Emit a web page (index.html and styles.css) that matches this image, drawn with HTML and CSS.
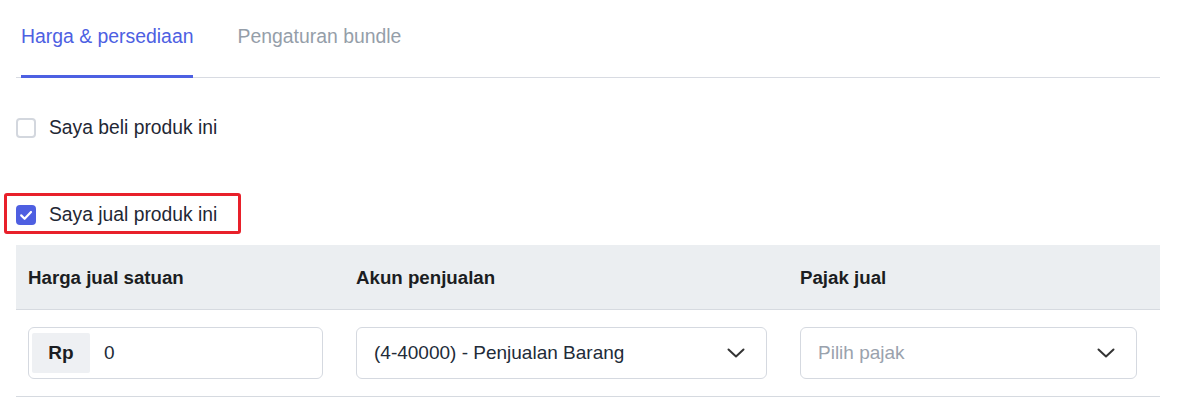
FILE: index.html
```html
<!DOCTYPE html>
<html lang="id">
<head>
<meta charset="utf-8">
<title>Harga &amp; persediaan</title>
<link rel="stylesheet" href="styles.css">
</head>
<body>
<div class="page">
  <nav class="tabs">
    <div class="tab tab-active">Harga &amp; persediaan</div>
    <div class="tab">Pengaturan bundle</div>
  </nav>

  <label class="option option-buy">
    <span class="box"></span>
    <span class="option-text">Saya beli produk ini</span>
  </label>

  <label class="option option-sell">
    <span class="box box-checked">
      <svg width="20" height="20" viewBox="0 0 20 20"><path d="M5.2 10.4 L8.6 13.8 L15 7" fill="none" stroke="#fff" stroke-width="2.2" stroke-linecap="round" stroke-linejoin="round"/></svg>
    </span>
    <span class="option-text">Saya jual produk ini</span>
    <span class="highlight"></span>
  </label>

  <div class="table">
    <div class="row head">
      <div class="cell">Harga jual satuan</div>
      <div class="cell">Akun penjualan</div>
      <div class="cell cell-last">Pajak jual</div>
    </div>
    <div class="row body">
      <div class="cell">
        <div class="field">
          <span class="addon">Rp</span>
          <span class="value">0</span>
        </div>
      </div>
      <div class="cell">
        <div class="field select">
          <span class="value value-select">(4-40000) - Penjualan Barang</span>
          <svg class="chev" width="18" height="10" viewBox="0 0 18 10"><path d="M1.5 1.5 L9 8.5 L16.5 1.5" fill="none" stroke="#333" stroke-width="2" stroke-linecap="round" stroke-linejoin="round"/></svg>
        </div>
      </div>
      <div class="cell cell-last">
        <div class="field select">
          <span class="value value-select placeholder">Pilih pajak</span>
          <svg class="chev" width="18" height="10" viewBox="0 0 18 10"><path d="M1.5 1.5 L9 8.5 L16.5 1.5" fill="none" stroke="#333" stroke-width="2" stroke-linecap="round" stroke-linejoin="round"/></svg>
        </div>
      </div>
    </div>
  </div>
</div>
</body>
</html>
```

FILE: styles.css
```css
* { box-sizing: border-box; }

html, body {
  margin: 0;
  background: #ffffff;
}

body {
  font-family: "Liberation Sans", Arial, sans-serif;
  color: #1f2734;
}

.page {
  width: 1144px;
  margin-left: 16px;
}

.tabs {
  display: flex;
  gap: 44px;
  padding-left: 5px;
  border-bottom: 1px solid #d8dbe2;
}

.tab {
  font-size: 19.4px;
  line-height: 22px;
  padding: 25px 0 28px;
  color: #959ea9;
  border-bottom: 3px solid transparent;
  margin-bottom: -1px;
}

.tab-active {
  color: #4d60e2;
  border-bottom-color: #4d60e2;
}

.option {
  display: flex;
  align-items: center;
  gap: 13px;
  height: 20px;
  font-size: 19.3px;
  line-height: 20px;
  color: #1f2734;
}

.option-buy { margin-top: 40px; }

.option-sell {
  position: relative;
  margin-top: 67px;
}

.box {
  width: 20px;
  height: 20px;
  flex: none;
  border: 2px solid #d3d7de;
  border-radius: 4px;
  background: #fff;
}

.box-checked {
  border: none;
  background: #4e5fe1;
}

.box-checked svg { display: block; }

.highlight {
  position: absolute;
  left: -12px;
  top: -12px;
  width: 237px;
  height: 41px;
  border: 3px solid #e8202a;
  border-radius: 3px;
  pointer-events: none;
}

.table {
  margin-top: 20px;
}

.row {
  display: grid;
  grid-template-columns: 328px 444px 1fr;
}

.head {
  height: 65px;
  background: #ebeef1;
  border-bottom: 1px solid #d6dae0;
  align-items: center;
  font-weight: bold;
  font-size: 18.7px;
  line-height: 22px;
  color: #1b1d22;
}

.head .cell { padding-top: 1px; }

.body {
  border-bottom: 1px solid #d6dae0;
  padding: 17px 0 17px;
}

.cell {
  padding: 0 21px 0 12px;
}

.cell-last { padding-right: 23px; }

.field {
  display: flex;
  align-items: center;
  height: 52px;
  border: 1px solid #d5d9e0;
  border-radius: 6px;
  background: #fff;
  font-size: 19px;
  line-height: 22px;
}

.addon {
  align-self: stretch;
  margin: 5px 0 5px 3px;
  width: 58px;
  display: flex;
  align-items: center;
  justify-content: center;
  background: #eef0f3;
  border-radius: 2px;
  font-weight: bold;
  color: #1b1d22;
}

.value {
  padding-left: 14px;
  color: #222b38;
}

.select {
  justify-content: space-between;
  padding-right: 21px;
}

.value-select { padding-left: 17px; }

.placeholder { color: #9aa2ad; }

.chev {
  display: block;
  flex: none;
}
```
